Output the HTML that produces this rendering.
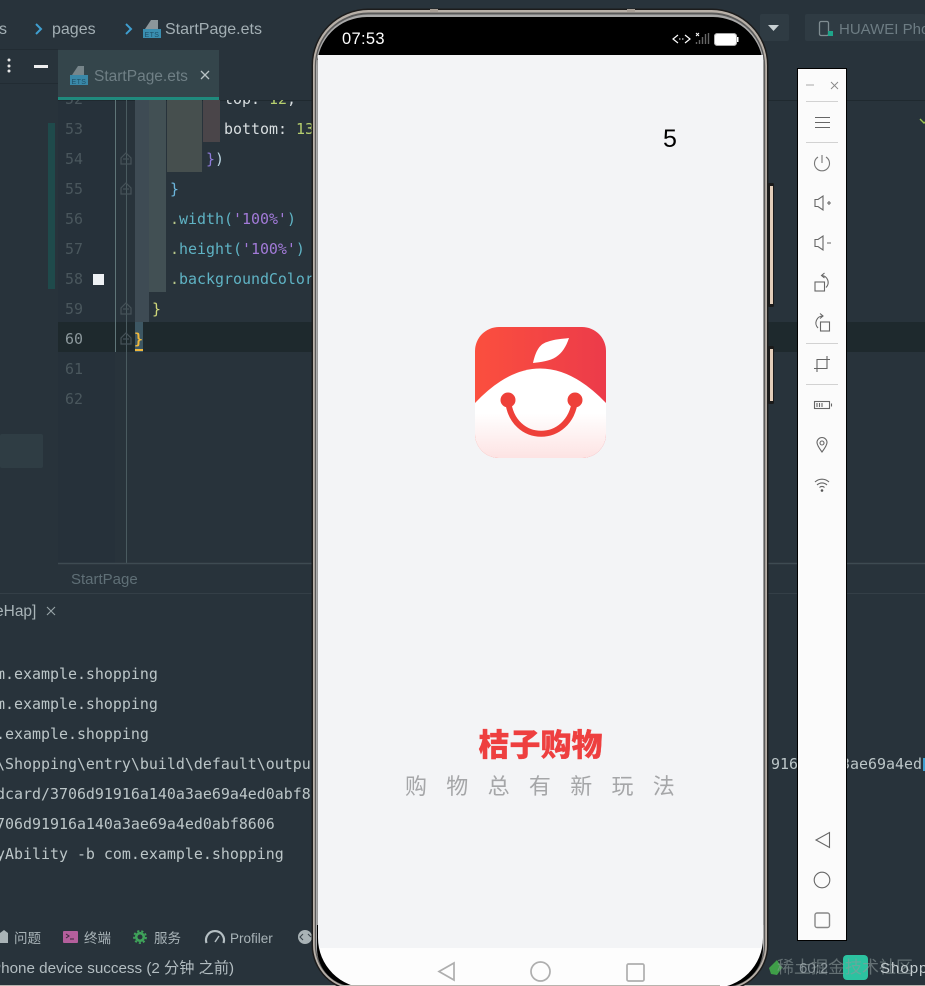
<!DOCTYPE html>
<html lang="zh"><head><meta charset="utf-8"><title>StartPage</title>
<style>
html,body{margin:0;padding:0;background:#28333b;width:925px;height:986px;overflow:hidden}
svg{display:block;position:absolute;left:0;top:0}
text{white-space:pre}
.m{font-family:"DejaVu Sans Mono","Liberation Mono",monospace;font-size:14.950px}
.s{font-family:"Liberation Sans","Noto Sans CJK SC",sans-serif}
.c{font-family:"Liberation Sans","Noto Sans CJK SC",sans-serif}
.ln{fill:#4a575d}.con{fill:#bcc6c8}
.i{fill:none;stroke:#666;stroke-width:1.1}
</style></head><body>
<svg width="925" height="986" viewBox="0 0 925 986" xmlns="http://www.w3.org/2000/svg">
<defs>
<linearGradient id="red" x1="0" x2="1" y1="0" y2="0"><stop offset="0" stop-color="#fb4f3e"/><stop offset="1" stop-color="#ec3b4a"/></linearGradient>
<linearGradient id="dome" x1="0" x2="0" y1="0" y2="1"><stop offset="0" stop-color="#fff"/><stop offset=".5" stop-color="#fff"/><stop offset="1" stop-color="#fde3e3"/></linearGradient>
<clipPath id="ic"><rect x="475" y="327" width="131" height="131" rx="24"/></clipPath>
<clipPath id="ed"><rect x="0" y="100" width="925" height="500"/></clipPath>
<clipPath id="scr"><path d="M318 55H763V938a50 50 0 0 1-50 50H368a50 50 0 0 1-50-50Z"/></clipPath>
</defs>
<rect width="925" height="986" fill="#28333b"/>
<!-- breadcrumb -->
<g class="s" font-size="16" fill="#a3afb4">
<text x="-1" y="34">s</text><text x="52" y="34">pages</text><text x="165" y="34">StartPage.ets</text></g>
<path d="M36 24l5 5-5 5M126 24l5 5-5 5" fill="none" stroke="#3f9fd0" stroke-width="2"/>
<path d="M151 20h7v9h-13z" fill="#8c979b"/><rect x="143" y="29" width="18" height="9" fill="#3a8eb0"/>
<text class="s" x="144.500" y="37" font-size="7" fill="#1d4f66" letter-spacing=".4">ETS</text>
<!-- left header -->
<path d="M0 49.500h58M0 83.500h58" stroke="#222c33"/>
<circle cx="9" cy="60" r="1.500" fill="#e6e6e6"/><circle cx="9" cy="66" r="1.500" fill="#e6e6e6"/><circle cx="9" cy="71" r="1.500" fill="#e6e6e6"/>
<rect x="34" y="65" width="14" height="3" fill="#eee"/>
<rect x="48" y="123" width="7" height="166" fill="#1f4a4b"/>
<rect x="0" y="434" width="43" height="34" rx="2" fill="#2f3d44"/>
<!-- gutter -->
<rect x="58" y="100" width="57" height="463" fill="#26313a"/>
<rect x="58" y="322" width="867" height="30" fill="#1e292d"/>
<path d="M58 100.500H925" stroke="#1f292f"/>
<path d="M115.500 100V352" stroke="#5f7578"/><path d="M126.500 100V563" stroke="#4a5b60"/>
<!-- tab -->
<rect x="58" y="50" width="161" height="47" fill="#34454b"/>
<rect x="58" y="97" width="161" height="3" fill="#1f8a7d"/>
<path d="M78 66h6v9h-12z" fill="#77858a"/><rect x="70" y="75" width="18" height="10" fill="#3a88a8"/>
<text class="s" x="71.500" y="84" font-size="7" fill="#1d4f66" letter-spacing=".4">ETS</text>
<text class="s" x="94" y="81" font-size="15.500" fill="#6f7f85">StartPage.ets</text>
<path d="M201 71l8 8M209 71l-8 8" stroke="#b8c2c5" stroke-width="1.300"/>
<!-- indents -->
<rect x="135" y="100" width="14" height="222" fill="#3e4b54"/>
<rect x="135" y="322" width="8" height="30" fill="#3d5763"/>
<rect x="149" y="100" width="17" height="192" fill="#425054"/>
<rect x="167" y="100" width="35" height="72" fill="#464f4e"/>
<rect x="203" y="100" width="17" height="42" fill="#4a4549"/>
<rect x="93" y="274" width="11" height="11" fill="#eef1f4"/>
<!-- fold marks -->
<g fill="none" stroke="#465258" stroke-width="1.200">
<path d="M121 164v-6l5-5 5 5v6zM123 159h6M121 194v-6l5-5 5 5v6zM123 189h6M121 314v-6l5-5 5 5v6zM123 309h6M121 344v-6l5-5 5 5v6zM123 339h6"/></g>
<!-- line numbers -->
<g class="m ln">
<text x="65" y="134">53</text><text x="65" y="164">54</text><text x="65" y="194">55</text><text x="65" y="224">56</text><text x="65" y="254">57</text><text x="65" y="284">58</text><text x="65" y="314">59</text><text x="65" y="344" fill="#8c989c">60</text><text x="65" y="374">61</text><text x="65" y="404">62</text></g>
<!-- code -->
<g class="m" clip-path="url(#ed)">
<text x="65" y="104" class="ln">52</text>
<text x="224" y="104" fill="#d8dee0">top: <tspan fill="#b6cf6e">12</tspan>,</text>
<text x="224" y="134" fill="#d8dee0">bottom: <tspan fill="#b6cf6e">13</tspan></text>
<text x="206" y="164"><tspan fill="#8d7ad8">}</tspan><tspan fill="#b9d4e0">)</tspan></text>
<text x="170" y="194" fill="#6cb6dc">}</text>
<text x="170" y="224" fill="#5fb3c4"><tspan fill="#b8c88a">.</tspan>width(<tspan fill="#a27ad8">'100%'</tspan>)</text>
<text x="170" y="254" fill="#5fb3c4"><tspan fill="#b8c88a">.</tspan>height(<tspan fill="#a27ad8">'100%'</tspan>)</text>
<text x="170" y="284" fill="#5fb3c4"><tspan fill="#b8c88a">.</tspan>backgroundColor</text>
<text x="152" y="314" fill="#cfd77a">}</text>
<text x="134" y="344" fill="#f0b83c" font-weight="bold">}</text>
</g>
<rect x="135" y="349" width="8" height="2" fill="#f0b83c"/>
<!-- lower panels -->
<path d="M58 563.500H925" stroke="#3e4b52" stroke-width="1.500"/><path d="M0 593.500H925" stroke="#343f47"/>
<text class="s" x="71" y="584" font-size="15" fill="#5f6f76">StartPage</text>
<text class="s" x="-5" y="616" font-size="15.500" fill="#a9b4b8">eHap]</text>
<path d="M47 607l8 8M55 607l-8 8" stroke="#98a4a8" stroke-width="1.100"/>
<g class="m con">
<text x="-4" y="679">m.example.shopping</text>
<text x="-4" y="709">m.example.shopping</text>
<text x="-4" y="739">.example.shopping</text>
<text x="-4" y="769">\Shopping\entry\build\default\output</text>
<text x="-4" y="799">dcard/3706d91916a140a3ae69a4ed0abf8</text>
<text x="-4" y="829">706d91916a140a3ae69a4ed0abf8606</text>
<text x="-4" y="859">yAbility -b com.example.shopping</text>
<text x="771" y="769">916</text><text x="841" y="769">3ae69a4ed</text>
</g>
<rect x="923" y="758" width="2" height="13" fill="#3f9fd0"/>
<path d="M920 119l4 4 1-1" fill="none" stroke="#9ac24c" stroke-width="1.400"/>
<!-- tool tabs -->
<path d="M0 933l4-3 4 3v10H-1z" fill="#a9b3b6"/>
<rect x="63" y="931" width="15" height="12" rx="1" fill="#b45f9c"/>
<path d="M66 934l3 2-3 2M70 939h4" stroke="#3a2a3a" fill="none"/>
<circle cx="140" cy="937" r="3.800" fill="none" stroke="#3fa35a" stroke-width="2.600"/>
<circle cx="140" cy="937" r="6" fill="none" stroke="#3fa35a" stroke-width="1.800" stroke-dasharray="2.200 2"/>
<path d="M206.500 943A9 9 0 1 1 223.500 943" fill="none" stroke="#b5bfc3" stroke-width="2.200"/><path d="M215 942l4-6" stroke="#b5bfc3" stroke-width="1.500"/>
<circle cx="305" cy="937" r="7" fill="#a9b3b6"/><path d="M303 934l-3 3 3 3M308 934l3 3" fill="none" stroke="#3a454c" stroke-width="1.100"/>
<g class="c" font-size="13.500" fill="#a9b4b8">
<text x="14" y="943">问题</text><text x="84" y="943">终端</text><text x="154" y="943">服务</text><text x="230" y="943">Profiler</text></g>
<text class="c" x="-9" y="973" font-size="15.200" fill="#b3bdc1">Phone device success (2 分钟 之前)</text>
<!-- top right -->
<rect x="760" y="14" width="29" height="27" rx="2" fill="#2f3b43"/>
<path d="M768 25h11l-5.500 6z" fill="#c8d0d3"/>
<rect x="805" y="14" width="120" height="27" rx="2" fill="#2f3b43"/>
<rect x="819.500" y="21.500" width="9" height="14" rx="1.500" fill="none" stroke="#7f8c91" stroke-width="1.300"/>
<rect x="828" y="31" width="5" height="5" fill="#1fa58a"/>
<text class="s" x="839" y="34" font-size="15" fill="#6d7c83">HUAWEI Pho</text>
<!-- watermark under frame -->
<path d="M769 968l8-8 5 8-5 7-6-1z" fill="#3f9e48"/>
<rect x="843" y="955" width="25" height="25" rx="4" fill="#2cc2a0"/>
<text class="c" x="777" y="973" font-size="17" fill="#8d9a9a" opacity=".6">稀土掘金技术社区</text>
<text class="s" x="799" y="973" font-size="15" fill="#b3bdc1" opacity=".65">60:2</text>
<text class="s" x="880" y="973" font-size="15" letter-spacing="1" fill="#c3cbce">Shopp</text>
<rect x="0" y="985" width="925" height="1" fill="#b8b4ae"/>
<!-- side buttons -->
<rect x="768" y="183" width="6" height="124" rx="1.500" fill="#1a1a1a"/><rect x="770" y="186" width="3" height="118" fill="#e3cdb9"/>
<rect x="768" y="346" width="6" height="58" rx="1.500" fill="#1a1a1a"/><rect x="770" y="349" width="3" height="52" fill="#e3cdb9"/>
<!-- phone -->
<path d="M368.500 8.500H711.500A57 57 0 0 1 768.500 65.500V945A46 46 0 0 1 722.500 991H357.500A46 46 0 0 1 311.500 945V65.500A57 57 0 0 1 368.500 8.500Z" fill="#1c1c1c"/>
<path d="M368.500 10H711.500A55.500 55.500 0 0 1 767 65.500V945A44.500 44.500 0 0 1 722.500 989.500H357.500A44.500 44.500 0 0 1 313 945V65.500A55.500 55.500 0 0 1 368.500 10Z" fill="#b8b0a8"/>
<path d="M368.300 12.500H711.700A53.500 53.500 0 0 1 765.200 66V945A43 43 0 0 1 722.200 988H357.800A43 43 0 0 1 314.800 945V66A53.500 53.500 0 0 1 368.300 12.500Z" fill="#5a5a5a"/>
<path d="M368 14.500H712A52 52 0 0 1 764 66.500V945A42 42 0 0 1 722 987H358A42 42 0 0 1 316 945V66.500A52 52 0 0 1 368 14.500Z" fill="#a9a9a9"/>
<path d="M367 17H713A50 50 0 0 1 763 67V948.500A38 38 0 0 1 725 986.500H355A38 38 0 0 1 317 948.500V67A50 50 0 0 1 367 17Z" fill="#000"/>
<path d="M317 60h1.500V925H317zM762.500 60H764V925h-1.500z" fill="#999"/>
<g clip-path="url(#scr)">
<rect x="318" y="55" width="445" height="893" fill="#f3f4f6"/>
<rect x="318" y="948" width="445" height="40" fill="#fdfdfd"/>
</g>
<rect x="430" y="9" width="8" height="3" fill="#a89f96"/><rect x="627" y="9" width="8" height="3" fill="#a89f96"/>
<rect x="340" y="985" width="380" height="1" fill="#b8b4ae"/>
<!-- status bar -->
<text class="s" x="342" y="44" font-size="16.500" fill="#fff" letter-spacing=".3">07:53</text>
<path d="M678 35l-5 4 5 4M685 35l5 4-5 4" fill="none" stroke="#fff" stroke-width="1.200"/><path d="M679 39h5" stroke="#fff" stroke-dasharray="1.500 1.500"/>
<path d="M696.500 44v-2M699.500 44v-4M702.500 44v-7M705.500 44v-10M708.500 44v-11" stroke="#666" stroke-width="1.400"/>
<path d="M696 33l3 3M699 33l-3 3" stroke="#fff" stroke-width="1"/>
<rect x="715" y="34" width="21" height="11" rx="2" fill="#fff"/><rect x="714.500" y="33.500" width="22" height="12" rx="2.500" fill="none" stroke="#ddd" stroke-width=".8"/>
<rect x="737" y="37" width="1.500" height="5" fill="#fff"/>
<!-- screen content -->
<text class="s" x="663" y="147" font-size="25" fill="#000">5</text>
<g clip-path="url(#ic)">
<rect x="475" y="327" width="131" height="131" fill="url(#red)"/>
<path d="M475 403Q540 334 606 403V458H475Z" fill="url(#dome)"/>
<path d="M533 363C536 350 540 344 547 342C555 339 562 339 569 338C566 347 562 353 556 357C550 361 541 362 533 363Z" fill="#fff"/>
<path d="M508 400C512 445 570 445 575 400" fill="none" stroke="#ee4039" stroke-width="6"/>
<circle cx="508" cy="400" r="7.500" fill="#ee4039"/><circle cx="575" cy="400" r="7.500" fill="#ee4039"/>
</g>
<text class="c" x="540.500" y="756" text-anchor="middle" font-size="31" font-weight="900" fill="#ee3f3f" stroke="#ee3f3f" stroke-width=".3">桔子购物</text>
<text class="c" x="405" y="794" font-size="22" fill="#a5a6a8" letter-spacing="19.300">购物总有新玩法</text>
<!-- nav -->
<g fill="none" stroke="#aeaeae" stroke-width="1.700">
<path d="M454 963V980L439 971.500Z"/><circle cx="540.500" cy="971.500" r="9.500"/><rect x="627" y="964" width="17" height="17" rx="1.500"/></g>
<!-- side panel -->
<rect x="797.500" y="68.500" width="49" height="872" fill="#fbfbfb" stroke="#000"/>
<path d="M806 85h8" stroke="#bbb" stroke-width="1.300"/><path d="M831 82l7 7M838 82l-7 7" stroke="#888" stroke-width=".9"/>
<path d="M806 101.500h32M806 142.500h32M806 343.500h32M806 384.500h32" stroke="#d2d2d2"/>
<path d="M815 117.500h15M815 122.500h15M815 127.500h15" stroke="#666" stroke-width="1.100"/>
<g class="i">
<path d="M818 157a7.500 7.500 0 1 0 8 0M822 155v8" stroke="#777"/>
<path d="M815 199.500h3l5-3.500v14l-5-3.500h-3zM827 203h4M829 201v4"/>
<path d="M815 239.500h3l5-3.500v14l-5-3.500h-3zM827 243h4"/>
<rect x="815" y="282" width="9.500" height="9"/><path d="M822 275.500a7 7 0 0 1 4 12M824.500 273l-3 2.500 3 2.500"/>
<rect x="820.500" y="322" width="9" height="9"/><path d="M823 316a7 7 0 0 0-5 12M820 313.500l3 2.500-3 2.500"/>
<path d="M817 372V359.500H830M827 356V368.500H814"/>
<rect x="814.500" y="401.500" width="15" height="7"/><path d="M831.500 403.500v3M817 403v4M819.500 403v4M822 403v4"/>
<path d="M822 452c-3-4-5-7-5-9.500a5 5 0 0 1 10 0c0 2.500-2 5.500-5 9.500z"/><circle cx="822" cy="443" r="2"/>
<path d="M815 482a10 10 0 0 1 14 0M817 485a7 7 0 0 1 10 0M819.500 487.500a3.500 3.500 0 0 1 5 0"/>
<path d="M829.500 832.500V847.500L816 840Z"/><circle cx="822" cy="880" r="7.800"/>
<rect x="815" y="913" width="14.500" height="14.500" rx="2" stroke="#888" stroke-width="1.400"/>
</g>
<circle cx="822" cy="490.500" r="1.300" fill="#555"/>
</svg>
</body></html>
